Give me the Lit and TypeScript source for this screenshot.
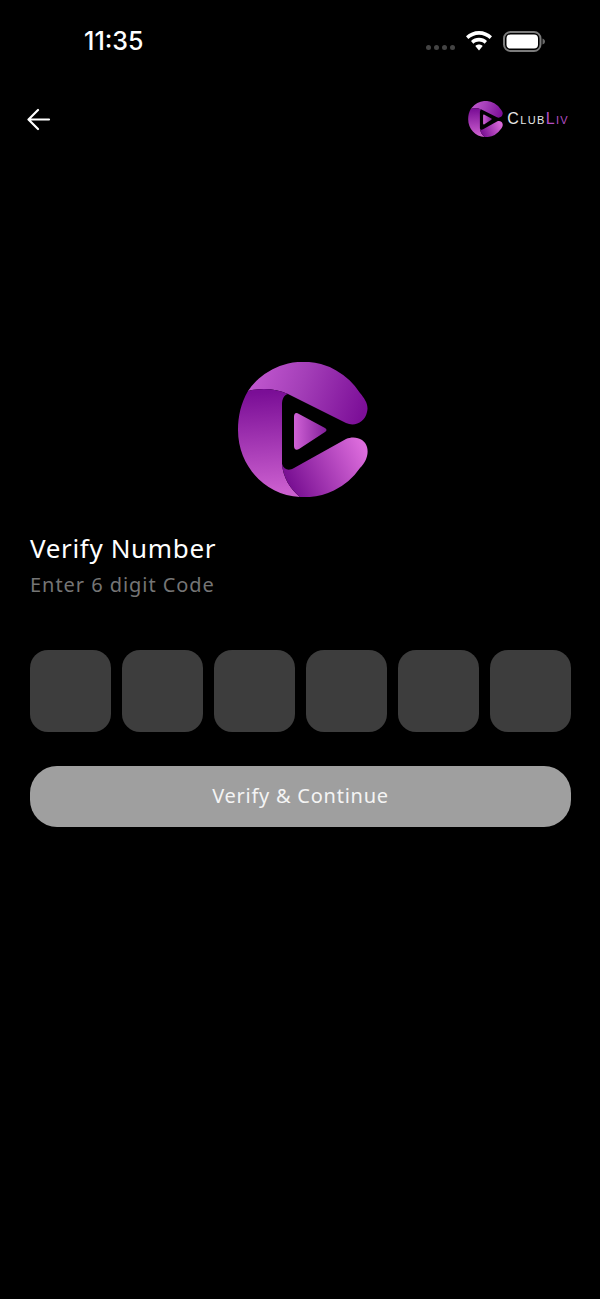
import { LitElement, html, css, svg } from "lit";
import { customElement } from "lit/decorators.js";

// brand mark, drawn on a 130x135 box
const logoMark = (id: string) => svg`
  <defs>
    <linearGradient id="${id}-top" x1="10" y1="10" x2="125" y2="50" gradientUnits="userSpaceOnUse">
      <stop offset="0" stop-color="#c45ad2" />
      <stop offset="0.45" stop-color="#a43fb8" />
      <stop offset="1" stop-color="#7c0f98" />
    </linearGradient>
    <linearGradient id="${id}-left" x1="30" y1="30" x2="35" y2="130" gradientUnits="userSpaceOnUse">
      <stop offset="0" stop-color="#7a0e96" />
      <stop offset="1" stop-color="#cb5fcf" />
    </linearGradient>
    <linearGradient id="${id}-bottom" x1="50" y1="120" x2="125" y2="85" gradientUnits="userSpaceOnUse">
      <stop offset="0" stop-color="#780f92" />
      <stop offset="1" stop-color="#dc6cdc" />
    </linearGradient>
    <linearGradient id="${id}-play" x1="56" y1="68" x2="90" y2="68" gradientUnits="userSpaceOnUse">
      <stop offset="0" stop-color="#d062d6" />
      <stop offset="1" stop-color="#7f1c98" />
    </linearGradient>
  </defs>
  <path fill="url(#${id}-top)" d="M10 29A67 67 0 0 1 122 31C127 37 131 43 129 50C127 60 117 65 108 61L50 32C37 26 22 26 10 29Z" />
  <path fill="url(#${id}-left)" d="M10 29C22 26 37 26 50 32C46 33 44 37 44 42V102C45 115 52 127 62 135C27 133 0 104 0 68C0 54 3 41 10 29Z" />
  <path fill="url(#${id}-bottom)" d="M44 102C46 108 51 109 56 106L108 77C117 73 127 77 129 85C131 92 128 100 122 106A67 67 0 0 1 62 135C52 127 45 115 44 102Z" />
  <path fill="url(#${id}-play)" d="M56 55C56 51 58 50 61 52L87 66C89 67 89 69 87 70L61 87C58 89 56 87 56 84Z" />
`;

@customElement("app-root")
export class AppRoot extends LitElement {
  static styles = css`
    :host {
      display: block;
      width: 600px;
      height: 1299px;
      background: #000;
      overflow: hidden;
      font-family: "Inter", "Liberation Sans", sans-serif;
      color: #fff;
    }
    .status {
      height: 82px;
      display: flex;
      align-items: center;
      padding: 0 55px 0 84px;
      box-sizing: border-box;
    }
    .time {
      font-family: "Inter", "Liberation Sans", sans-serif;
      font-size: 25px;
      font-weight: 500;
      flex: 1;
    }
    .status-icons {
      display: flex;
      align-items: center;
      gap: 11px;
    }
    .dots {
      display: flex;
      gap: 3px;
      margin-top: 13px;
    }
    .dots i {
      width: 5px;
      height: 5px;
      border-radius: 50%;
      background: #444;
    }
    .nav {
      height: 74px;
      display: flex;
      align-items: center;
      justify-content: space-between;
      padding: 0 31px 0 27px;
    }
    .back {
      display: block;
      width: 24px;
      height: 24px;
    }
    .brand {
      display: flex;
      align-items: center;
      gap: 4px;
    }
    .brand svg {
      width: 35px;
      height: 36px;
    }
    .wordmark {
      font-family: "Liberation Sans", sans-serif;
      font-size: 16px;
      font-variant: small-caps;
      letter-spacing: 1.35px;
      color: #e8e8e8;
    }
    .wordmark span {
      color: #b44fc4;
    }
    main {
      display: flex;
      flex-direction: column;
      padding: 0 29px 0 30px;
    }
    .mark {
      display: block;
      width: 130px;
      height: 135px;
      margin: 206px 0 0 208px;
    }
    h1 {
      margin: 33px 0 0;
      font-family: "Noto Sans", sans-serif;
      font-size: 26px;
      line-height: 36px;
      font-weight: 400;
      letter-spacing: 0.65px;
    }
    .sub {
      margin: 3px 0 0;
      font-family: "Noto Sans", sans-serif;
      font-size: 20px;
      line-height: 32px;
      letter-spacing: 0.95px;
      color: #757575;
    }
    .code {
      display: grid;
      grid-template-columns: repeat(6, 81px);
      justify-content: space-between;
      margin-top: 49px;
    }
    .code div {
      height: 82px;
      border-radius: 18px;
      background: #3d3d3d;
    }
    .verify {
      all: unset;
      display: block;
      box-sizing: border-box;
      margin-top: 34px;
      height: 61px;
      padding-bottom: 3px;
      border-radius: 27px;
      background: #9f9f9f;
      text-align: center;
      font-family: "Noto Sans", sans-serif;
      font-size: 20px;
      letter-spacing: 0.75px;
      color: #f4f4f4;
    }
  `;

  render() {
    return html`
      <div class="status">
        <span class="time">11:35</span>
        <div class="status-icons">
          <div class="dots"><i></i><i></i><i></i><i></i></div>
          <svg width="26" height="20" viewBox="0 0 26 20">
            <path fill="#fff" d="M13 0C18 0 22.500 2 26 5.300L23.700 8C20.800 5.300 17 3.700 13 3.700C9 3.700 5.200 5.300 2.300 8L0 5.300C3.500 2 8 0 13 0Z" />
            <path fill="#fff" d="M13 6.800C16 6.800 18.800 8 21 10L18.700 12.700C17.100 11.300 15.100 10.500 13 10.500C10.900 10.500 8.900 11.300 7.300 12.700L5 10C7.200 8 10 6.800 13 6.800Z" />
            <path fill="#fff" d="M13 13.500C14.400 13.500 15.700 14 16.700 15L13 19.500L9.300 15C10.300 14 11.600 13.500 13 13.500Z" />
          </svg>
          <svg width="42" height="21" viewBox="0 0 42 21">
            <rect x="1" y="1" width="36.500" height="19" rx="6.500" fill="none" stroke="#7c7c7c" stroke-width="2" />
            <rect x="3.500" y="3.500" width="31.500" height="14" rx="4" fill="#fff" />
            <path fill="#6a6a6a" d="M39.500 7.500C41 8 42 9 42 10.500C42 12 41 13 39.500 13.500Z" />
          </svg>
        </div>
      </div>
      <div class="nav">
        <svg class="back" viewBox="0 0 24 24" fill="none" stroke="#fff" stroke-width="2.200" stroke-linecap="round" stroke-linejoin="round">
          <path d="M22 12.500H1.800M11 3L1.500 12.500L11 22" />
        </svg>
        <div class="brand">
          <svg viewBox="0 0 130 135">${logoMark("small")}</svg>
          <span class="wordmark">Club<span>Liv</span></span>
        </div>
      </div>
      <main>
        <svg class="mark" viewBox="0 0 130 135">${logoMark("large")}</svg>
        <h1>Verify Number</h1>
        <p class="sub">Enter 6 digit Code</p>
        <div class="code">
          ${[0, 1, 2, 3, 4, 5].map(() => html`<div></div>`)}
        </div>
        <button class="verify">Verify &amp; Continue</button>
      </main>
    `;
  }
}
